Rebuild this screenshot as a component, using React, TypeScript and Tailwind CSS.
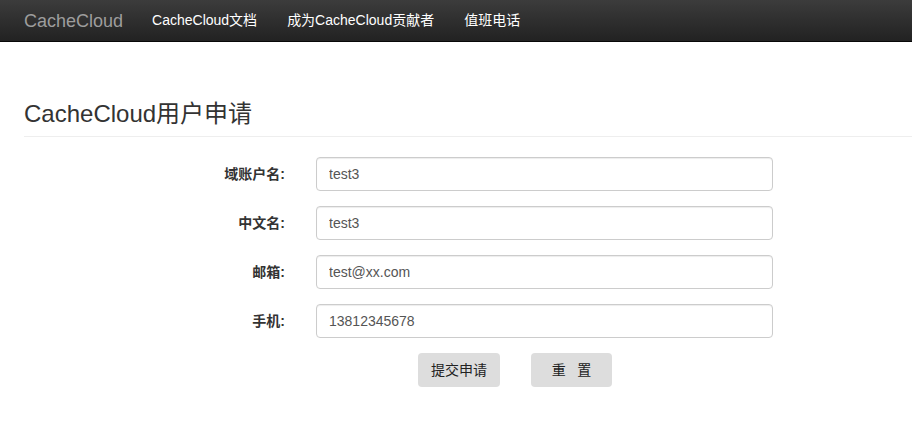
import React from "react";

const font = { fontFamily: '"Liberation Sans", Arial, "Noto Sans CJK SC", sans-serif' };

const rows = [
  { label: "域账户名:", value: "test3" },
  { label: "中文名:", value: "test3" },
  { label: "邮箱:", value: "test@xx.com" },
  { label: "手机:", value: "13812345678" },
];

export default function App() {
  return (
    <div className="w-[912px] h-[436px] bg-white overflow-hidden font-['Liberation_Sans','Noto_Sans_CJK_SC',sans-serif]" style={font}>
      <nav className="h-[42px] bg-gradient-to-b from-[#3c3c3c] to-[#222222] border-b border-[#080808] flex items-center">
        <span className="ml-[24px] text-[18px] text-[#9d9d9d] leading-none">CacheCloud</span>
        <div className="flex ml-[14px] text-[14px] text-white">
          <span className="px-[15px]">CacheCloud文档</span>
          <span className="px-[15px]">成为CacheCloud贡献者</span>
          <span className="px-[15px]">值班电话</span>
        </div>
      </nav>
      <div className="pl-[24px]">
        <h1 className="mt-[58px] text-[24px] leading-[28px] text-[#333] pb-[8px] border-b border-[#eee]">
          CacheCloud用户申请
        </h1>
        <div className="mt-[20px] flex flex-col gap-[15px]">
          {rows.map((r) => (
            <div key={r.label} className="flex items-center">
              <label className="w-[261px] text-right text-[14px] font-bold text-[#333]">{r.label}</label>
              <input
                readOnly
                value={r.value}
                className="ml-[31px] w-[457px] h-[34px] border border-[#ccc] rounded-[4px] px-[12px] text-[14px] text-[#555] shadow-[inset_0_1px_1px_rgba(0,0,0,0.075)] outline-none"
                style={font}
              />
            </div>
          ))}
          <div className="flex pl-[394px] gap-[31px]">
            <button className="w-[82px] h-[34px] bg-[#ddd] rounded-[4px] text-[14px] text-[#222]">提交申请</button>
            <button className="w-[81px] h-[34px] bg-[#ddd] rounded-[4px] text-[14px] text-[#222] whitespace-pre">重   置</button>
          </div>
        </div>
      </div>
    </div>
  );
}
